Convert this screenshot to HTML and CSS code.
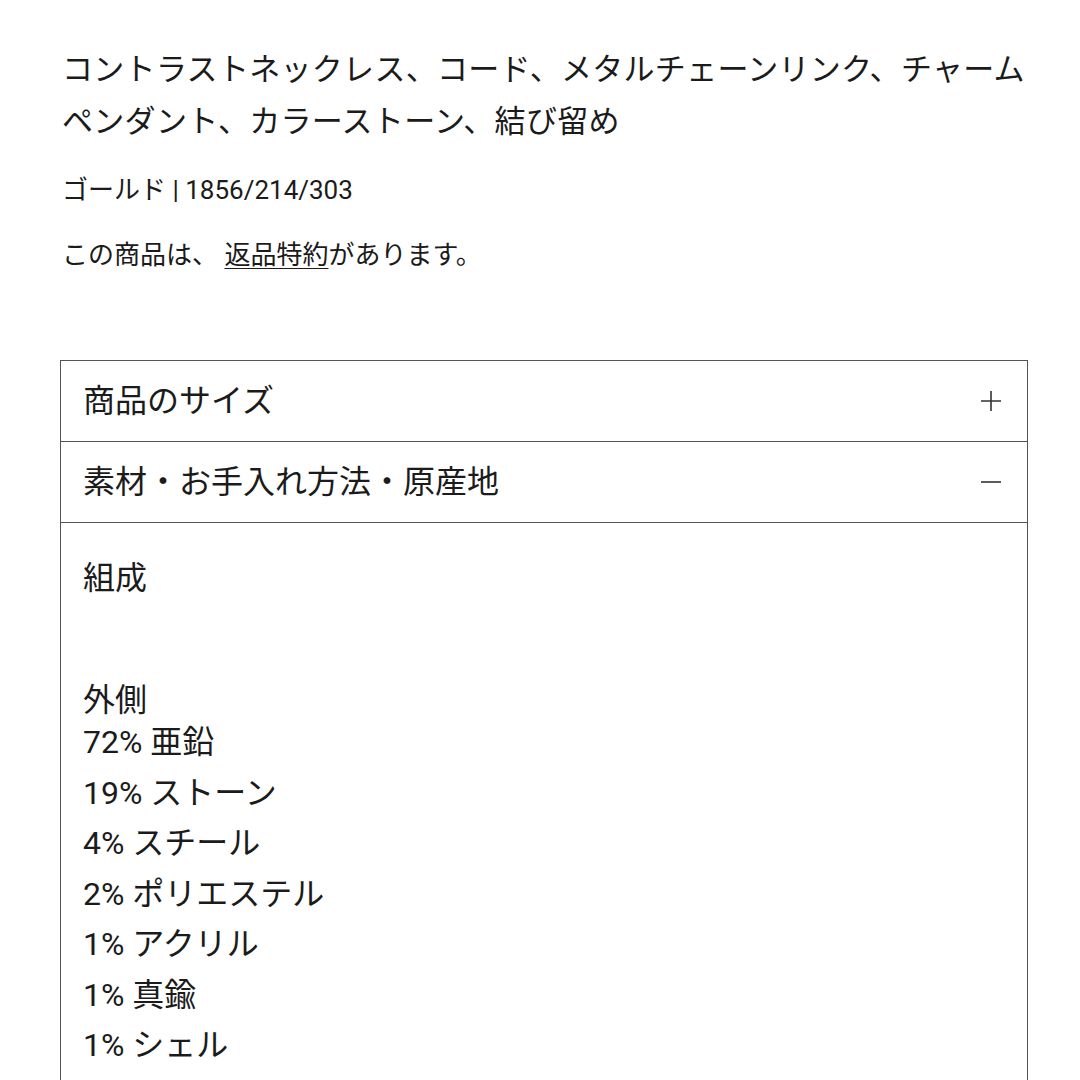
FILE: index.html
```html
<!DOCTYPE html>
<html lang="ja">
<head>
<meta charset="utf-8">
<link rel="stylesheet" href="styles.css">
</head>
<body>
<main class="page">
  <h1 class="title">コントラストネックレス、コード、メタルチェーンリンク、チャームペンダント、カラーストーン、結び留め</h1>
  <p class="meta">ゴールド | 1856/214/303</p>
  <p class="notice">この商品は、 <a class="link" href="#">返品特約</a>があります。</p>

  <section class="accordion">
    <div class="acc-row">
      <span class="acc-label">商品のサイズ</span>
      <svg class="acc-icon" viewBox="0 0 22 22" width="22" height="22"><path d="M11 1v20M1 11h20" stroke="#333" stroke-width="1.6" fill="none"/></svg>
    </div>
    <div class="acc-row">
      <span class="acc-label">素材・お手入れ方法・原産地</span>
      <svg class="acc-icon" viewBox="0 0 22 22" width="22" height="22"><path d="M1 11h20" stroke="#333" stroke-width="1.6" fill="none"/></svg>
    </div>
    <div class="acc-body">
      <h2 class="section-title">組成</h2>
      <p class="group-title">外側</p>
      <ul class="composition">
        <li>72% 亜鉛</li>
        <li>19% ストーン</li>
        <li>4% スチール</li>
        <li>2% ポリエステル</li>
        <li>1% アクリル</li>
        <li>1% 真鍮</li>
        <li>1% シェル</li>
      </ul>
    </div>
  </section>
</main>
</body>
</html>
```
FILE: styles.css
```css
html, body {
  margin: 0;
  padding: 0;
  background: #fff;
}
body {
  font-family: Roboto, "Noto Sans CJK JP", sans-serif;
  color: #1b1b1b;
}
.page {
  padding: 44px 50px 0 60px;
}
.title {
  margin: 0 0 0 2px;
  font-size: 31px;
  font-weight: 400;
  line-height: 52px;
  letter-spacing: 0.3px;
}
.meta {
  margin: 26px 0 0 2px;
  font-size: 26px;
  line-height: 32px;
}
.notice {
  margin: 33px 0 0 2px;
  font-size: 26px;
  line-height: 32px;
}
.link {
  color: inherit;
  text-decoration: underline;
  text-underline-offset: 4px;
  text-decoration-thickness: 1px;
}
.accordion {
  margin: 89px 2px 0 0;
  border: 1px solid #555;
  border-bottom: none;
}
.acc-row {
  height: 80px;
  border-bottom: 1px solid #555;
  display: flex;
  align-items: center;
  justify-content: space-between;
  padding: 0 25px 0 22px;
}
.acc-label {
  font-size: 32px;
  line-height: 42px;
}
.acc-icon {
  display: block;
}
.acc-body {
  padding: 34px 22px 40px;
}
.section-title {
  margin: 0;
  font-size: 32px;
  font-weight: 400;
  line-height: 42px;
}
.group-title {
  margin: 80px 0 0;
  font-size: 32px;
  line-height: 42px;
}
.composition {
  list-style: none;
  margin: 0;
  padding: 0;
  font-size: 32px;
  line-height: 42px;
}
.composition li + li {
  margin-top: 8.5px;
}
```
